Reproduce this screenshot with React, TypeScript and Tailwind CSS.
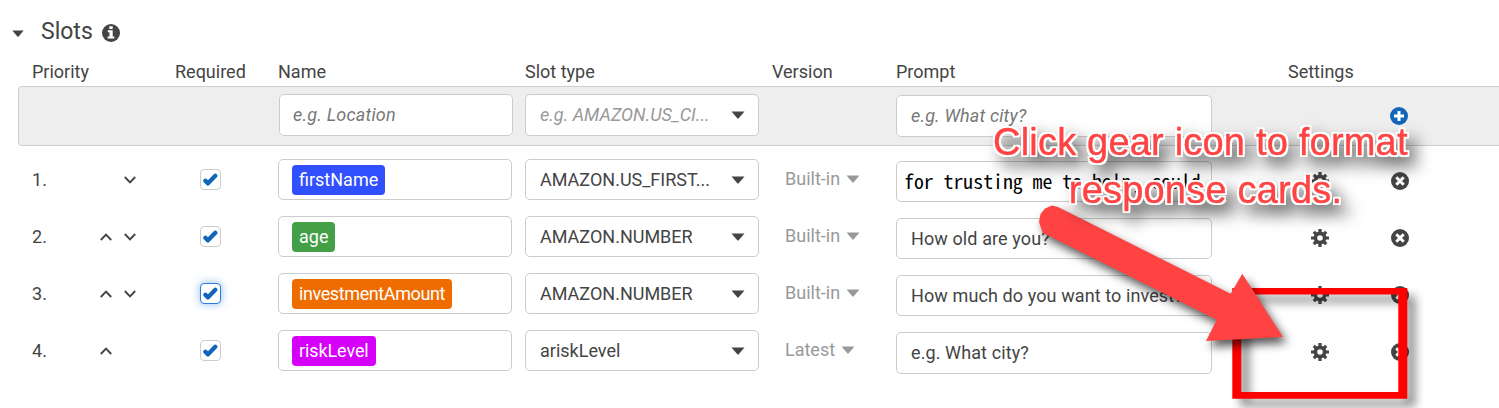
import type { ReactNode } from "react";

type Slot = {
  name: string;
  tag: string;
  type: string;
  version: string;
  prompt: string;
  mono?: boolean;
  up: boolean;
  down: boolean;
  focused?: boolean;
};

const slots: Slot[] = [
  { name: "firstName", tag: "bg-[#304ffe]", type: "AMAZON.US_FIRST...", version: "Built-in", prompt: "for trusting me to help, could", mono: true, up: false, down: true },
  { name: "age", tag: "bg-[#43a047]", type: "AMAZON.NUMBER", version: "Built-in", prompt: "How old are you?", up: true, down: true },
  { name: "investmentAmount", tag: "bg-[#ef6c00] tracking-[-0.4px]", type: "AMAZON.NUMBER", version: "Built-in", prompt: "How much do you want to invest?", up: true, down: true, focused: true },
  { name: "riskLevel", tag: "bg-[#d500f9] tracking-[-0.1px]", type: "ariskLevel", version: "Latest", prompt: "e.g. What city?", up: true, down: false },
];

const columns = "grid grid-cols-[143px_103px_247px_247px_124px_392px_1fr]";

function Caret({ className = "" }: { className?: string }) {
  return (
    <svg viewBox="0 0 14 8" className={`h-2 w-[14px] shrink-0 ${className}`}>
      <path d="M.5 .5h13L7.7 7.3Q7 8 6.3 7.3Z" fill="currentColor" />
    </svg>
  );
}

function Chevron({ up = false }: { up?: boolean }) {
  return (
    <svg viewBox="0 0 12 8" className="h-2 w-3" fill="none" stroke="#444" strokeWidth="1.9">
      <path d={up ? "M.8 7 6 1.7 11.2 7" : "M.8 1 6 6.3 11.2 1"} />
    </svg>
  );
}

function Info() {
  return (
    <svg viewBox="0 0 18 18" className="size-[18px]">
      <circle cx="9" cy="9" r="9" fill="#444" />
      <path d="M7.3 2.3h3.4v2.6H7.3zM5.8 6.3h4.9v6.2h1.6v2H5.6v-2h1.9V8.3H5.8z" fill="#fff" />
    </svg>
  );
}

function Gear() {
  return (
    <svg viewBox="0 0 18 18" className="size-[18px]" fill="none" stroke="#444">
      <path strokeWidth="3.2" d="M9 0v4M9 14v4M0 9h4M14 9h4M2.8 2.8l3 3M12.2 12.2l3 3M15.2 2.8l-3 3M2.8 15.2l3-3" />
      <circle cx="9" cy="9" r="4.6" strokeWidth="3.6" />
    </svg>
  );
}

function Remove() {
  return (
    <svg viewBox="0 0 18 18" className="size-[18px]">
      <circle cx="9" cy="9" r="9" fill="#444" />
      <path d="m5.3 5.3 7.4 7.4M12.7 5.3l-7.4 7.4" stroke="#fff" strokeWidth="3" />
    </svg>
  );
}

function Add() {
  return (
    <svg viewBox="0 0 18 18" className="size-[18px]">
      <circle cx="9" cy="9" r="9" fill="#1166bb" />
      <path d="M9 4v10M4 9h10" stroke="#fff" strokeWidth="3" />
    </svg>
  );
}

function Checkbox({ focused = false }: { focused?: boolean }) {
  return (
    <span
      className={`flex size-[21px] items-center justify-center rounded-[4px] border bg-white ${
        focused ? "border-[#2a7de1] shadow-[0_0_8px_rgba(42,125,225,0.55)]" : "border-[#ccc]"
      }`}
    >
      <svg viewBox="0 0 15 13" className="h-[13px] w-[15px]">
        <path d="M2.4 7.8 4.8 10.4 12.3 2.8" fill="none" stroke="#1166bb" strokeWidth="4.3" strokeLinecap="round" strokeLinejoin="round" />
      </svg>
    </span>
  );
}

function Field({ children, className = "" }: { children?: ReactNode; className?: string }) {
  return (
    <div className={`flex items-center overflow-hidden whitespace-nowrap rounded-[5px] border border-[#ccc] bg-white ${className}`}>
      {children}
    </div>
  );
}

export default function App() {
  return (
    <div className="relative h-[408px] w-[1499px] overflow-hidden bg-white font-['Roboto',sans-serif] text-[18px] leading-6 text-[#444]">
      <div className="flex h-[60px] items-center pl-[11px] pt-[2px]">
        <Caret className="mt-[4px] h-[7px] w-3" />
        <h2 className="ml-[16px] mt-[2px] text-[23px] leading-7">Slots</h2>
        <span className="ml-[9px] mt-[4px]">
          <Info />
        </span>
      </div>

      <div className={`${columns} h-[26px] pl-8 leading-6`}>
        <span>Priority</span>
        <span>Required</span>
        <span>Name</span>
        <span>Slot type</span>
        <span>Version</span>
        <span>Prompt</span>
        <span>Settings</span>
      </div>

      <div className={`${columns} ml-[18px] h-[60px] w-[1500px] rounded-[4px] border border-[#ccc] bg-[#eee] pl-[13px]`}>
        <span />
        <span />
        <Field className="ml-px mt-[7px] h-[42px] w-[234px] pl-[13px] italic tracking-[0.2px] text-[#777]">e.g. Location</Field>
        <Field className="mt-[7px] h-[42px] w-[234px] justify-between pl-[14px] pr-[13px]">
          <span className="italic text-[#999]">e.g. AMAZON.US_CI...</span>
          <Caret />
        </Field>
        <span />
        <Field className="mt-[8px] h-[42px] w-[316px] pl-[14px] italic tracking-[0.15px] text-[#777]">e.g. What city?</Field>
        <span className="ml-[102px] mt-5">
          <Add />
        </span>
      </div>

      <div className="pt-[13px]">
        {slots.map((slot, i) => (
          <div key={slot.name} className={`${columns} h-[57px] pl-8`}>
            <div className="flex h-[42px] items-center">
              <span className="w-[68px]">{i + 1}.</span>
              <span className="flex gap-[12px]">
                <span className={slot.up ? "flex" : "invisible flex"}>
                  <Chevron up />
                </span>
                {slot.down && <Chevron />}
              </span>
            </div>
            <div className="ml-[25px] mt-[10px]">
              <Checkbox focused={slot.focused} />
            </div>
            <Field className="h-[41px] w-[234px] pl-[13px]">
              <span className={`${slot.tag} rounded-[4px] px-[7px] py-[3px] text-white`}>{slot.name}</span>
            </Field>
            <Field className="h-[41px] w-[234px] justify-between pl-[14px] pr-[13px]">
              <span>{slot.type}</span>
              <Caret />
            </Field>
            <div className="flex h-[39px] items-center gap-[6px] pl-[13px] text-[#999]">
              {slot.version}
              <Caret />
            </div>
            {slot.mono ? (
              <Field className="mt-[2px] h-[41px] w-[316px] px-[7px] pb-[2px]">
                <span className="font-['Noto_Sans_Mono_CJK_SC','Noto_Sans_Mono_CJK_JP','Liberation_Mono',monospace] text-[19.8px] text-black">{slot.prompt}</span>
              </Field>
            ) : (
              <Field className={`mt-[2px] w-[316px] pl-[14px] tracking-[0.1px] ${i === slots.length - 1 ? "h-[42px]" : "h-[41px]"}`}>{slot.prompt}</Field>
            )}
            <div className="ml-[23px] mt-[13px] flex gap-[62px]">
              <Gear />
              <Remove />
            </div>
          </div>
        ))}
      </div>

      <svg viewBox="0 0 1499 408" className="pointer-events-none absolute inset-0 h-[408px] w-[1499px]">
        <path
          d="M1232.3 288h175v110.7h-175zM1241.3 294.5v97.5h157v-97.5z"
          fillRule="evenodd"
          fill="#f00"
          className="[filter:drop-shadow(8px_8px_5px_rgba(0,0,0,0.45))]"
        />
        <path
          d="M1039 222 1040.500 214 1045 208.500 1052 205.500 1058 207 1230.700 293.700 1242.300 273.700 1283 337 1206 341 1216.700 319.700 1043 233 1041 228Z"
          fill="#ff4343"
          className="[filter:drop-shadow(4px_6px_5px_rgba(0,0,0,0.65))]"
        />
      </svg>
      <p className="absolute left-[993px] top-[118px] w-[414px] whitespace-nowrap text-center font-['Liberation_Sans',sans-serif] text-[38px] leading-[48px] tracking-[0.2px] text-[#ff4343] [-webkit-text-stroke:0.4px_#ff4343] [filter:drop-shadow(8px_10px_8px_rgba(0,0,0,0.55))] [text-shadow:2px_0_0_white,-2px_0_0_white,0_2px_0_white,0_-2px_0_white,2px_2px_0_white,-2px_2px_0_white,2px_-2px_0_white,-2px_-2px_0_white]">
        Click gear icon to format
        <br />
        <span className="pl-[11px]">response cards.</span>
      </p>
    </div>
  );
}
